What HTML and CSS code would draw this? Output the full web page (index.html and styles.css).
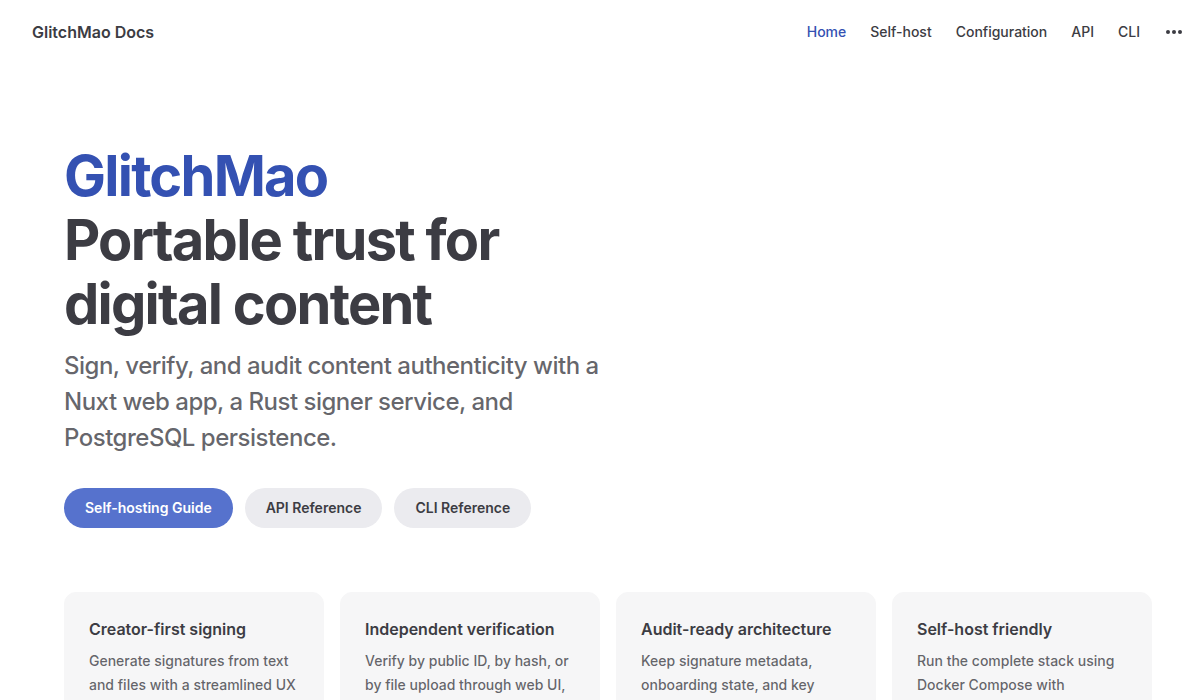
FILE: index.html
```html
<!DOCTYPE html>
<html lang="en">
<head>
    <meta charset="UTF-8">
    <meta name="viewport" content="width=device-width, initial-scale=1.0">
    <title>GlitchMao Docs</title>
    <link rel="stylesheet" href="styles.css">
</head>
<body>
    <header class="navbar">
        <a class="nav-title" href="#">GlitchMao Docs</a>
        <nav class="nav-menu">
            <a class="nav-link active" href="#">Home</a>
            <a class="nav-link" href="#">Self-host</a>
            <a class="nav-link" href="#">Configuration</a>
            <a class="nav-link" href="#">API</a>
            <a class="nav-link" href="#">CLI</a>
            <button class="nav-extra" type="button" aria-label="extra navigation">
                <svg width="16" height="4" viewBox="0 0 16 4">
                    <circle cx="2" cy="2" r="2"></circle>
                    <circle cx="8" cy="2" r="2"></circle>
                    <circle cx="14" cy="2" r="2"></circle>
                </svg>
            </button>
        </nav>
    </header>

    <main class="home">
        <section class="hero">
            <h1 class="hero-heading">
                <span class="hero-name">GlitchMao</span>
                <span class="hero-text">Portable trust for digital content</span>
            </h1>
            <p class="hero-tagline">Sign, verify, and audit content authenticity with a Nuxt web app, a Rust signer service, and PostgreSQL persistence.</p>
            <div class="hero-actions">
                <a class="btn btn-brand" href="#">Self-hosting Guide</a>
                <a class="btn btn-alt" href="#">API Reference</a>
                <a class="btn btn-alt" href="#">CLI Reference</a>
            </div>
        </section>

        <section class="features">
            <div class="feature">
                <h2 class="feature-title">Creator-first signing</h2>
                <p class="feature-details">Generate signatures from text and files with a streamlined UX and clear onboarding.</p>
            </div>
            <div class="feature">
                <h2 class="feature-title">Independent verification</h2>
                <p class="feature-details">Verify by public ID, by hash, or by file upload through web UI, API, or CLI.</p>
            </div>
            <div class="feature">
                <h2 class="feature-title">Audit-ready architecture</h2>
                <p class="feature-details">Keep signature metadata, onboarding state, and key material in PostgreSQL.</p>
            </div>
            <div class="feature">
                <h2 class="feature-title">Self-host friendly</h2>
                <p class="feature-details">Run the complete stack using Docker Compose with production-ready defaults.</p>
            </div>
        </section>
    </main>
</body>
</html>
```

FILE: styles.css
```css
* {
    box-sizing: border-box;
}
body {
    margin: 0;
    font-family: Inter, "Noto Sans", sans-serif;
    color: #3c3c43;
    background: #fff;
    -webkit-font-smoothing: antialiased;
}
a {
    text-decoration: none;
    color: inherit;
}
.navbar {
    height: 64px;
    padding: 0 32px;
    display: flex;
    align-items: center;
    justify-content: space-between;
}
.nav-title {
    font-size: 16px;
    font-weight: 600;
    line-height: 64px;
}
.nav-menu {
    display: flex;
    align-items: center;
}
.nav-link {
    padding: 0 12px;
    font-size: 14px;
    font-weight: 500;
    line-height: 64px;
}
.nav-link.active {
    color: #3451b2;
}
.nav-extra {
    display: flex;
    align-items: center;
    justify-content: center;
    width: 44px;
    height: 40px;
    margin-right: -28px;
    padding: 0;
    border: none;
    background: none;
    fill: #3c3c43;
    cursor: pointer;
}
.home {
    padding-bottom: 64px;
}
.hero {
    padding: 80px 64px 64px;
}
.hero-heading {
    margin: 0;
    max-width: 576px;
    font-size: 56px;
    line-height: 64px;
    font-weight: 700;
    letter-spacing: -1.75px;
}
.hero-name {
    display: block;
    color: #3451b2;
}
.hero-text {
    display: block;
    color: #3c3c43;
}
.hero-tagline {
    margin: 0;
    padding-top: 12px;
    max-width: 576px;
    font-size: 24px;
    line-height: 36px;
    font-weight: 500;
    letter-spacing: -0.5px;
    color: rgba(60, 60, 67, 0.78);
}
.hero-actions {
    display: flex;
    gap: 12px;
    padding-top: 32px;
}
.btn {
    display: inline-block;
    height: 40px;
    padding: 0 20px;
    border-radius: 20px;
    border: 1px solid transparent;
    font-size: 14px;
    font-weight: 600;
    line-height: 38px;
}
.btn-brand {
    background: #5672cd;
    color: #fff;
}
.btn-alt {
    background: #ebebef;
    color: #3c3c43;
}
.features {
    padding: 0 48px 0 64px;
    display: grid;
    grid-template-columns: repeat(4, 1fr);
    gap: 16px;
}
.feature {
    border: 1px solid #f6f6f7;
    border-radius: 12px;
    background: #f6f6f7;
    padding: 24px;
    height: 100%;
}
.feature-title {
    margin: 0;
    font-size: 16px;
    line-height: 24px;
    font-weight: 600;
}
.feature-details {
    margin: 0;
    padding-top: 8px;
    font-size: 14px;
    line-height: 24px;
    font-weight: 500;
    color: rgba(60, 60, 67, 0.78);
}
```
